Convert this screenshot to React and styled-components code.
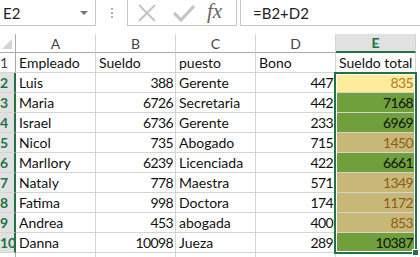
import React from 'react';
import styled, { createGlobalStyle } from 'styled-components';

const GlobalStyle = createGlobalStyle`
  html, body {
    margin: 0;
    padding: 0;
    background: #fff;
    overflow: hidden;
  }
  body {
    font-family: Lato, "Liberation Sans", sans-serif;
  }
`

const Window = styled.div`
  width: 420px;
  height: 257px;
  overflow: hidden;
  background: #fff;
`

const FormulaBar = styled.div`
  display: flex;
  height: 26px;
  align-items: stretch;
`
const NameBox = styled.div`
  width: 96px;
  box-sizing: border-box;
  border-right: 1px solid #c6c6c6;
  border-bottom: 1px solid #c6c6c6;
  display: flex;
  align-items: center;
  justify-content: space-between;
  padding: 0 7px 0 3px;
  font-size: 15px;
  color: #222;
`
const DropArrow = styled.span`
  width: 0;
  height: 0;
  border-left: 4px solid transparent;
  border-right: 4px solid transparent;
  border-top: 4px solid #777;
`
const Grip = styled.div`
  width: 31px;
  display: flex;
  flex-direction: column;
  align-items: center;
  justify-content: center;
  gap: 2px;
  span {
    width: 2px;
    height: 2px;
    background: #b0b0b0;
  }
`
const ToolBox = styled.div`
  width: 110px;
  box-sizing: border-box;
  border: 1px solid #c6c6c6;
  border-top: none;
  display: flex;
  align-items: center;
  padding-left: 8px;
  gap: 14px;
`
const Fx = styled.span`
  font-family: "Liberation Serif", serif;
  font-style: italic;
  font-size: 21px;
  color: #666;
  margin-left: -3px;
  margin-top: -2px;
`
const FormulaInput = styled.div`
  flex: 1;
  margin-left: 3px;
  border-left: 1px solid #c6c6c6;
  border-bottom: 1px solid #c6c6c6;
  display: flex;
  align-items: center;
  padding-left: 12px;
  font-size: 15px;
  color: #222;
`

const Sheet = styled.div`
  position: relative;
  margin-top: 8px;
`
const Row = styled.div`
  display: flex;
  height: ${p => p.$h || 20}px;
`
const Corner = styled.div`
  width: 16px;
  box-sizing: border-box;
  border-right: 1px solid #ababab;
  border-bottom: 1px solid #ababab;
  position: relative;
  &::after {
    content: '';
    position: absolute;
    right: 3px;
    bottom: 3px;
    border-left: 10px solid transparent;
    border-bottom: 10px solid #d4d4d4;
  }
`
const ColHead = styled.div`
  width: 80px;
  box-sizing: border-box;
  border-right: 1px solid #d4d4d4;
  border-bottom: ${p => (p.$active ? '2px solid #217346' : '1px solid #ababab')};
  background: ${p => (p.$active ? '#e1e1e1' : '#fff')};
  color: ${p => (p.$active ? '#217346' : '#444')};
  font-weight: ${p => (p.$active ? 700 : 400)};
  font-size: 14px;
  display: flex;
  align-items: center;
  justify-content: center;
`
const RowHead = styled.div`
  width: 16px;
  box-sizing: border-box;
  border-right: ${p => (p.$active ? '2px solid #217346' : '1px solid #ababab')};
  border-bottom: 1px solid #d4d4d4;
  background: ${p => (p.$active ? '#e1e1e1' : '#fff')};
  color: ${p => (p.$active ? '#217346' : '#444')};
  font-weight: ${p => (p.$active ? 700 : 400)};
  font-size: 14px;
  line-height: 20px;
  overflow: hidden;
  white-space: nowrap;
`
const Cell = styled.div`
  width: 80px;
  box-sizing: border-box;
  border-right: 1px solid #d4d4d4;
  border-bottom: 1px solid #d4d4d4;
  background: ${p => p.$fill || '#fff'};
  color: ${p => p.$ink || '#111'};
  font-size: 14px;
  line-height: 20px;
  padding: 0 2px 0 3px;
  text-align: ${p => (p.$num ? 'right' : 'left')};
  letter-spacing: ${p => (p.$num ? '-0.6px' : '0')};
  white-space: nowrap;
`
const Selection = styled.div`
  position: absolute;
  left: 334px;
  top: 38px;
  width: 83px;
  height: 182px;
  box-sizing: border-box;
  border: 2px solid #217346;
  box-shadow: inset 0 0 0 1px #fff;
  pointer-events: none;
  &::after {
    content: '';
    position: absolute;
    right: -4px;
    bottom: -4px;
    width: 5px;
    height: 5px;
    background: #217346;
    border: 1px solid #fff;
  }
`

const fills = {
  y: { fill: '#ffeb9c', ink: '#b07a22' },
  g: { fill: '#6fa03c', ink: '#111' },
  t: { fill: '#c8b878', ink: '#8c5c18' },
};

const rows = [
  ['Luis', 388, 'Gerente', 447, 835, 'y'],
  ['Maria', 6726, 'Secretaria', 442, 7168, 'g'],
  ['Israel', 6736, 'Gerente', 233, 6969, 'g'],
  ['Nicol', 735, 'Abogado', 715, 1450, 't'],
  ['Marllory', 6239, 'Licenciada', 422, 6661, 'g'],
  ['Nataly', 778, 'Maestra', 571, 1349, 't'],
  ['Fatima', 998, 'Doctora', 174, 1172, 't'],
  ['Andrea', 453, 'abogada', 400, 853, 't'],
  ['Danna', 10098, 'Jueza', 289, 10387, 'g'],
];

const Cross = () => (
  <svg width="22" height="22" viewBox="0 0 22 22">
    <path d="M3 3 L19 19 M19 3 L3 19" stroke="#c4c4c4" strokeWidth="2" fill="none" />
  </svg>
);

const Check = () => (
  <svg width="24" height="22" viewBox="0 0 24 22">
    <path d="M2 11 L9 18 L22 4" stroke="#c4c4c4" strokeWidth="3.2" fill="none" />
  </svg>
);

const App = () => (
  <Window>
    <GlobalStyle />
    <FormulaBar>
      <NameBox>
        E2
        <DropArrow />
      </NameBox>
      <Grip>
        <span />
        <span />
        <span />
      </Grip>
      <ToolBox>
        <Cross />
        <Check />
        <Fx>fx</Fx>
      </ToolBox>
      <FormulaInput>=B2+D2</FormulaInput>
    </FormulaBar>
    <Sheet>
      <Row $h={19}>
        <Corner />
        {['A', 'B', 'C', 'D', 'E'].map(c => (
          <ColHead key={c} $active={c === 'E'}>{c}</ColHead>
        ))}
      </Row>
      <Row>
        <RowHead>1</RowHead>
        <Cell>Empleado</Cell>
        <Cell>Sueldo</Cell>
        <Cell>puesto</Cell>
        <Cell>Bono</Cell>
        <Cell>Sueldo total</Cell>
      </Row>
      {rows.map((r, i) => (
        <Row key={r[0]}>
          <RowHead $active>{i + 2}</RowHead>
          <Cell>{r[0]}</Cell>
          <Cell $num>{r[1]}</Cell>
          <Cell>{r[2]}</Cell>
          <Cell $num>{r[3]}</Cell>
          <Cell $num $fill={fills[r[5]].fill} $ink={fills[r[5]].ink}>{r[4]}</Cell>
        </Row>
      ))}
      <Row>
        <RowHead />
        <Cell />
        <Cell />
        <Cell />
        <Cell />
        <Cell />
      </Row>
      <Selection />
    </Sheet>
  </Window>
);

export default App;
